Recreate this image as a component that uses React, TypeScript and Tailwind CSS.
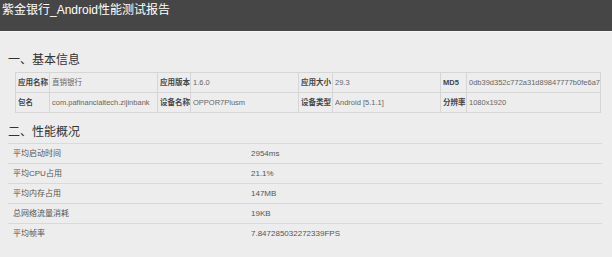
import React from "react";

const font = { fontFamily: '"Liberation Sans", "Noto Sans CJK SC", Arial, sans-serif' };

const info: [string, string, string, string, string, string, string, string][] = [
  ["应用名称", "直销银行", "应用版本", "1.6.0", "应用大小", "29.3", "MD5", "0db39d352c772a31d89847777b0fe6a7"],
  ["包名", "com.pafinancialtech.zijinbank", "设备名称", "OPPOR7Plusm", "设备类型", "Android [5.1.1]", "分辨率", "1080x1920"],
];

const perf: [string, string][] = [
  ["平均启动时间", "2954ms"],
  ["平均CPU占用", "21.1%"],
  ["平均内存占用", "147MB"],
  ["总网络流量消耗", "19KB"],
  ["平均帧率", "7.847285032272339FPS"],
];

export default function App() {
  return (
    <div className="w-[612px] h-[257px] bg-[#ededed] overflow-hidden" style={font}>
      <div className="h-[31px] bg-[#464646] pl-[2px] pt-[3px] text-[12px] leading-[14px] text-white">
        紫金银行_Android性能测试报告
      </div>
      <div className="h-px bg-[#f7f7f7]" />
      <div className="pl-[8px] mt-[21px] text-[12px] leading-[14px] text-[#333]">一、基本信息</div>
      <div className="ml-[15px] mt-[5px] grid grid-cols-[34px_108px_33px_108px_34px_108px_26px_134px] border-l border-t border-[#d6d6d6] w-[586px]">
        {info.map((row, ri) =>
          row.map((cell, ci) => (
            <div
              key={`${ri}-${ci}`}
              className={`h-[20px] border-r border-b border-[#d6d6d6] pl-[2px] flex items-center whitespace-nowrap overflow-visible text-[7.5px] ${
                ci % 2 === 0 ? "text-[#444] font-bold" : "text-[#666]"
              }`}
            >
              {cell}
            </div>
          ))
        )}
      </div>
      <div className="pl-[8px] mt-[12px] text-[12px] leading-[14px] text-[#333]">二、性能概况</div>
      <div className="ml-[8px] mt-[4px] w-[594px]">
        {perf.map(([k, v]) => (
          <div key={k} className="h-[20px] border-t border-[#d9d9d9] flex items-center text-[8px] text-[#555]">
            <div className="w-[238px] pl-[5px]">{k}</div>
            <div className="pl-[5px]">{v}</div>
          </div>
        ))}
      </div>
    </div>
  );
}
